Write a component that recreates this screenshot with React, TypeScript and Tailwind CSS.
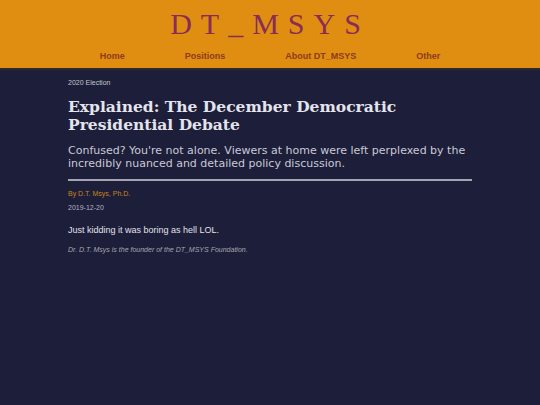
export default function App() {
  const links = ["Home", "Positions", "About DT_MSYS", "Other"];

  return (
    <div className="min-h-screen bg-[#1d1e3a] font-['Liberation_Sans',Arial,sans-serif]">
      <header className="bg-[#df8e12] border-b-2 border-[#2c2a2a] pt-[7px] pb-[6px]">
        <h1 className="text-center font-['Liberation_Serif',serif] text-[30px] leading-[33px] tracking-[9px] text-[#8a2c55]">
          DT_MSYS
        </h1>
        <nav className="mt-[10px] flex justify-center gap-[60px]">
          {links.map((l) => (
            <a
              key={l}
              href="#"
              className="text-[9px] leading-[12px] font-bold text-[#8e3a1e]"
            >
              {l}
            </a>
          ))}
        </nav>
      </header>

      <main className="mx-auto w-[404px] pt-[8px]">
        <p className="text-[7px] leading-[10px] text-[#c4c4cf]">2020 Election</p>
        <h2 className="mt-[10px] font-['DejaVu_Serif',serif] font-bold text-[15.5px] leading-[18px] text-[#e4e4ec]">
          Explained: The December Democratic Presidential Debate
        </h2>
        <p className="mt-[10px] font-['DejaVu_Sans',sans-serif] text-[11px] leading-[13px] text-[#c9cad6]">
          Confused? You're not alone. Viewers at home were left perplexed by the
          incredibly nuanced and detailed policy discussion.
        </p>
        <hr className="mt-[9px] border-0 h-[2px] bg-[#a3a3b2]" />
        <p className="mt-[8px] text-[7px] leading-[10px] text-[#c8841b]">
          By D.T. Msys, Ph.D.
        </p>
        <p className="mt-[4px] text-[7px] leading-[10px] text-[#b4b4c0]">2019-12-20</p>
        <p className="mt-[11px] text-[9px] leading-[12px] text-[#e2e2ea]">
          Just kidding it was boring as hell LOL.
        </p>
        <p className="mt-[9px] text-[7px] leading-[10px] italic text-[#a6a6b0]">
          Dr. D.T. Msys is the founder of the DT_MSYS Foundation.
        </p>
      </main>
    </div>
  );
}
